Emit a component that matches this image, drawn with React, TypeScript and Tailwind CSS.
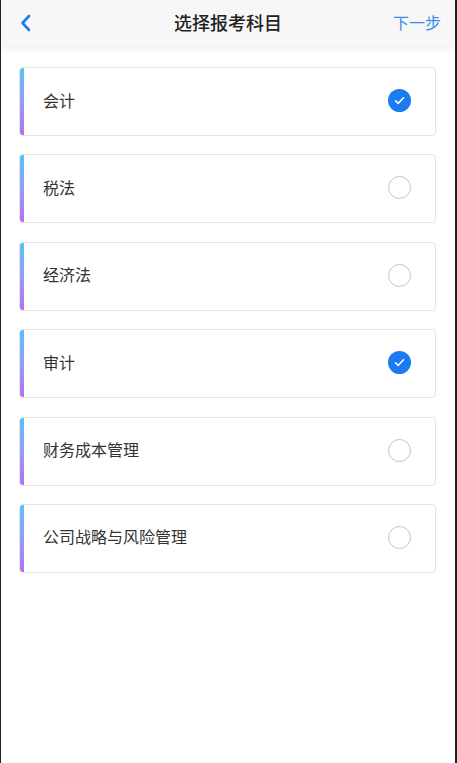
import React from "react";

const items = [
  { name: "会计", checked: true },
  { name: "税法", checked: false },
  { name: "经济法", checked: false },
  { name: "审计", checked: true },
  { name: "财务成本管理", checked: false },
  { name: "公司战略与风险管理", checked: false },
];

export default function App() {
  return (
    <div
      className="w-[457px] h-[763px] bg-white border-l border-l-[#222] border-r-2 border-r-[#222] flex flex-col overflow-hidden"
      style={{ fontFamily: '"Noto Sans", "Noto Sans CJK SC", sans-serif' }}
    >
      <div className="h-[46px] shrink-0 bg-[#f7f7f7] shadow-[0_2px_6px_rgba(0,0,0,0.08)] flex items-center justify-between pl-[18px] pr-[14px] relative z-10">
        <svg width="14" height="20" viewBox="0 0 14 20" fill="none">
          <path d="M10 3 L3.5 10 L10 17" stroke="#1a7cf0" strokeWidth="2.6" strokeLinecap="round" strokeLinejoin="round" />
        </svg>
        <div className="absolute left-0 right-0 text-center text-[18px] font-medium text-[#222] pointer-events-none">
          选择报考科目
        </div>
        <div className="text-[16px] text-[#3a8ee6]">下一步</div>
      </div>
      <div className="flex flex-col gap-[18.4px] pt-[21px] pl-[18px] pr-[19px]">
        {items.map((it) => (
          <div
            key={it.name}
            className="h-[69px] flex items-center rounded-[4px] border border-[#e3e3e3] bg-white relative overflow-hidden"
          >
            <div className="w-[4px] self-stretch bg-gradient-to-b from-[#4fc3f7] to-[#b46ef0]" />
            <div className="flex-1 pl-[19px] pb-[2px] text-[16px] text-[#333]">{it.name}</div>
            <div className="pr-[24px] pb-[2px]">
              {it.checked ? (
                <div className="w-[23px] h-[23px] rounded-full bg-[#1a7cf0] flex items-center justify-center">
                  <svg width="13" height="13" viewBox="0 0 13 13" fill="none">
                    <path d="M2.5 6.8 L5.3 9.3 L10.5 3.8" stroke="white" strokeWidth="1.6" strokeLinecap="round" strokeLinejoin="round" />
                  </svg>
                </div>
              ) : (
                <div className="w-[23px] h-[23px] rounded-full border-[1.5px] border-[#c4c4c4]" />
              )}
            </div>
          </div>
        ))}
      </div>
    </div>
  );
}
